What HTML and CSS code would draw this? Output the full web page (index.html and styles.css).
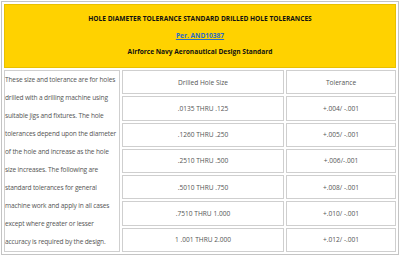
FILE: index.html
```html
<!DOCTYPE html>
<html>
<head>
<meta charset="utf-8">
<link rel="stylesheet" href="styles.css">
</head>
<body>
<table class="tol">
  <colgroup>
    <col class="c1"><col class="c2"><col class="c3">
  </colgroup>
  <tr>
    <td colspan="3" class="head">
      <div class="title">HOLE DIAMETER TOLERANCE STANDARD DRILLED HOLE TOLERANCES</div>
      <div class="ref"><a href="#">Per. AND10387</a></div>
      <div class="title">Airforce Navy Aeronautical Design Standard</div>
    </td>
  </tr>
  <tr>
    <td rowspan="7" class="desc">These size and tolerance are for holes drilled with a drilling machine using suitable jigs and fixtures. The hole tolerances depend upon the diameter of the hole and increase as the hole size increases. The following are standard tolerances for general machine work and apply in all cases except where greater or lesser accuracy is required by the design.</td>
    <td class="val">Drilled Hole Size</td>
    <td class="val">Tolerance</td>
  </tr>
  <tr><td class="val">.0135 THRU .125</td><td class="val">+.004/ -.001</td></tr>
  <tr><td class="val">.1260 THRU .250</td><td class="val">+.005/ -.001</td></tr>
  <tr><td class="val">.2510 THRU .500</td><td class="val">+.006/-.001</td></tr>
  <tr><td class="val">.5010 THRU .750</td><td class="val">+.008/ -.001</td></tr>
  <tr><td class="val">.7510 THRU 1.000</td><td class="val">+.010/ -.001</td></tr>
  <tr><td class="val">1 .001 THRU 2.000</td><td class="val">+.012/ -.001</td></tr>
</table>
</body>
</html>
```
FILE: styles.css
```css
html, body {
  margin: 0;
  padding: 0;
  background: #ffffff;
}
body {
  font-family: "Open Sans", "Noto Sans", sans-serif;
  color: #555555;
}
.tol {
  margin: 1px 0 0 1px;
  width: 398px;
  table-layout: fixed;
  border-collapse: separate;
  border-spacing: 2px;
  border: 1px solid #c4c4c4;
}
.c1 { width: 116px; }
.c2 { width: 162px; }
.c3 { width: 110px; }
.tol td {
  border: 1px solid #cfcfcf;
  padding: 0;
}
.head {
  height: 62px;
  background: #ffd200;
  border-color: #e8c000 !important;
  text-align: center;
  color: #111111;
}
.title {
  font-weight: bold;
  font-size: 6.6px;
  line-height: 16.5px;
}
.ref {
  font-size: 6.6px;
  line-height: 16.5px;
  font-weight: bold;
}
.ref a {
  color: #2b6cc4;
  text-decoration: underline;
}
.desc {
  vertical-align: top;
  font-size: 6.6px;
  line-height: 18px;
  letter-spacing: -0.16px;
}
.val {
  height: 22px;
  text-align: center;
  font-size: 6.6px;
}
```
